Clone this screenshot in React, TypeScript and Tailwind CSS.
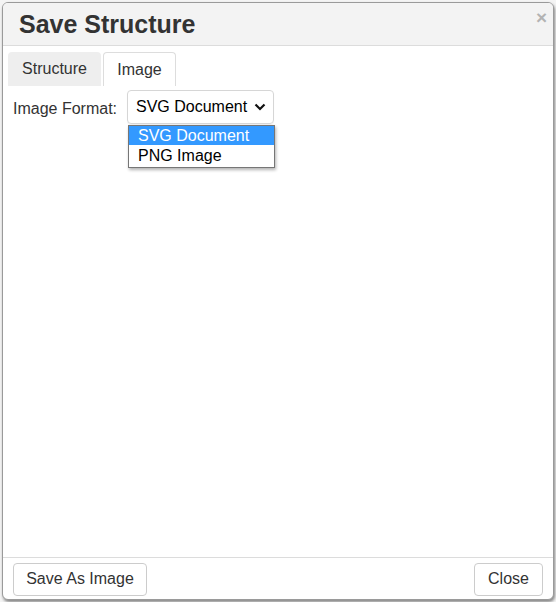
import React from 'react';

const font = { fontFamily: '"Liberation Sans", Arial, sans-serif' };

const App: React.FC = () => {
  return (
    <div className="w-[556px] h-[602px] bg-[#f4f4f4] p-[2px] pb-[2px]" style={font}>
      <div className="h-full flex flex-col bg-white border border-[#9a9a9a] rounded-[6px] shadow-[1px_2px_3px_rgba(0,0,0,0.45)] overflow-hidden relative">
        {/* header */}
        <div className="h-[43px] shrink-0 flex items-center pl-[16px] bg-[#f3f3f3] border-b border-[#dcdcdc] text-[#333]">
          <span className="text-[25px] font-bold leading-none mt-[1px]">Save Structure</span>
        </div>
        <button className="absolute right-[6px] top-[5px] text-[#b3b3b3] text-[19px] font-bold leading-none">×</button>

        {/* tabs */}
        <div className="flex gap-[2px] pl-[5px] pt-[6px] shrink-0">
          <div className="h-[34px] w-[93px] flex items-center justify-center bg-[#eeeeee] rounded-t-[4px] text-[16px] text-[#333]">
            Structure
          </div>
          <div className="h-[34px] w-[73px] flex items-center justify-center bg-white border border-b-0 border-[#dddddd] rounded-t-[4px] text-[16px] text-[#333]">
            Image
          </div>
        </div>

        {/* body */}
        <div className="flex-1 px-[10px] pt-[4px]">
          <div className="flex items-start">
            <span className="text-[16px] text-[#333] mt-[7px] w-[114px]">Image Format:</span>
            <div className="relative">
              <div className="w-[147px] h-[34px] border border-[#d6d6d6] rounded-[4px] flex items-center pl-[8px] pr-[7px] text-[16px] text-black shadow-[0_1px_1px_rgba(0,0,0,0.06)]">
                <span className="flex-1">SVG Document</span>
                <svg width="12" height="8" viewBox="0 0 12 8" fill="none">
                  <path d="M1.5 1.5 L6 6 L10.5 1.5" stroke="#111" strokeWidth="2.2" />
                </svg>
              </div>
              <div className="absolute left-[1px] top-[35px] w-[147px] bg-white border border-[#767676] shadow-[1px_2px_3px_rgba(0,0,0,0.3)] text-[16px] leading-[19px]">
                <div className="bg-[#3399ff] text-white pl-[9px] h-[19px] flex items-center">SVG Document</div>
                <div className="text-black pl-[9px] h-[20px] flex items-center mb-[2px]">PNG Image</div>
              </div>
            </div>
          </div>
        </div>

        {/* footer */}
        <div className="h-[42px] shrink-0 border-t border-[#dcdcdc] flex items-center justify-between pl-[10px] pr-[10px] pt-[1px]">
          <button className="h-[33px] w-[134px] border border-[#cccccc] rounded-[4px] bg-white text-[16px] text-[#333]">
            Save As Image
          </button>
          <button className="h-[33px] w-[69px] border border-[#cccccc] rounded-[4px] bg-white text-[16px] text-[#333]">
            Close
          </button>
        </div>
      </div>
    </div>
  );
};

export default App;
